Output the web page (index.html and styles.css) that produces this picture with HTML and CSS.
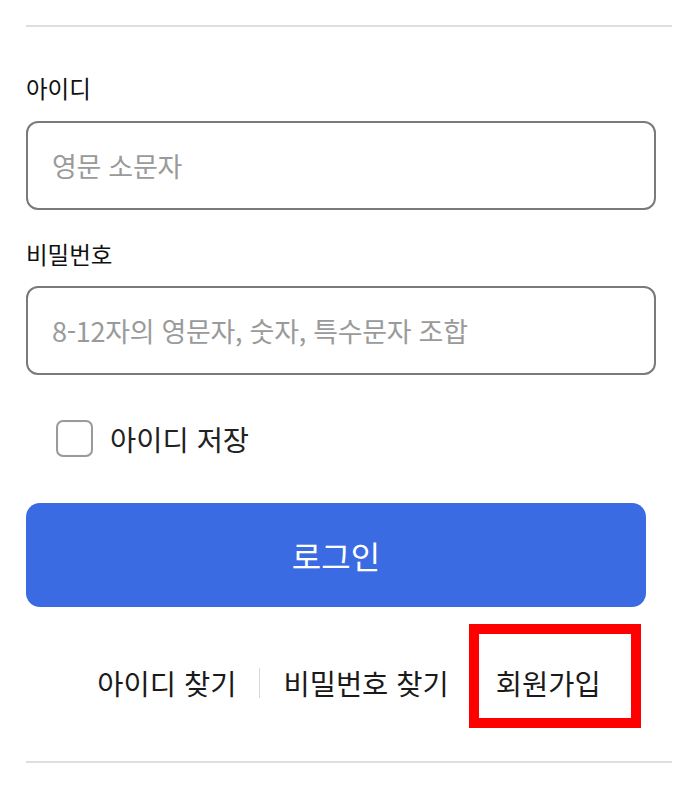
FILE: index.html
```html
<!DOCTYPE html>
<html lang="ko">
<head>
<meta charset="utf-8">
<link rel="stylesheet" href="styles.css">
</head>
<body>
<div class="page">
  <div class="rule rule-top"></div>
  <label class="field-label">아이디</label>
  <div class="input"><span class="placeholder">영문 소문자</span></div>
  <label class="field-label second">비밀번호</label>
  <div class="input"><span class="placeholder">8-12자의 영문자, 숫자, 특수문자 조합</span></div>
  <div class="remember">
    <span class="checkbox"></span>
    <span class="remember-text">아이디 저장</span>
  </div>
  <button class="login">로그인</button>
  <nav class="links">
    <a class="link">아이디 찾기</a>
    <span class="sep"></span>
    <a class="link">비밀번호 찾기</a>
    <span class="sep"></span>
    <a class="link signup">회원가입<span class="highlight"></span></a>
  </nav>
  <div class="rule rule-bottom"></div>
</div>
</body>
</html>
```
FILE: styles.css
```css
* { box-sizing: border-box; }
html, body { margin: 0; padding: 0; background: #fff; }
body {
  font-family: "Noto Sans CJK KR", "Noto Sans", sans-serif;
  color: #111;
}
.page {
  display: flex;
  flex-direction: column;
  padding: 0 28px 0 26px;
}
.rule { height: 2px; background: #dedede; }
.rule-top { margin-top: 25px; }
.field-label {
  margin-top: 45px;
  font-size: 23.5px;
  line-height: 32px;
  color: #111;
}
.field-label.second { margin-top: 28px; }
.input {
  margin-top: 17px;
  margin-right: 16px;
  height: 89px;
  border: 2px solid #7a7a7a;
  border-radius: 12px;
  display: flex;
  align-items: center;
  padding-left: 24px;
}
.field-label.second + .input { margin-top: 16px; }
.placeholder {
  font-size: 27px;
  color: #9a9a9a;
  letter-spacing: -0.3px;
}
.remember {
  margin-top: 43px;
  height: 40px;
  display: flex;
  align-items: center;
  padding-left: 30px;
}
.checkbox {
  width: 37px;
  height: 37px;
  border: 2px solid #9a9a9a;
  border-radius: 7px;
  background: #fff;
  box-shadow: inset 0 0 1px rgba(0,0,0,0.2);
}
.remember-text {
  margin-left: 17px;
  font-size: 28.5px;
  color: #222;
}
.login {
  margin-top: 45px;
  margin-right: 26px;
  height: 104px;
  border: 0;
  border-radius: 14px;
  background: #3a6be3;
  color: #fff;
  font-family: inherit;
  font-size: 32px;
  padding: 0;
}
.links {
  margin-top: 56px;
  height: 40px;
  display: flex;
  justify-content: center;
  align-items: center;
}
.link {
  font-size: 28.5px;
  font-weight: 400;
  color: #1a1a1a;
  line-height: 40px;
}
.sep {
  width: 1px;
  height: 30px;
  background: #d8d8d8;
  margin: 0 23px;
}
.signup { position: relative; }
.highlight {
  position: absolute;
  left: -27px;
  right: -40px;
  top: -39px;
  bottom: -25px;
  border: 10px solid #ff0000;
}
.rule-bottom { margin-top: 58px; }
```
